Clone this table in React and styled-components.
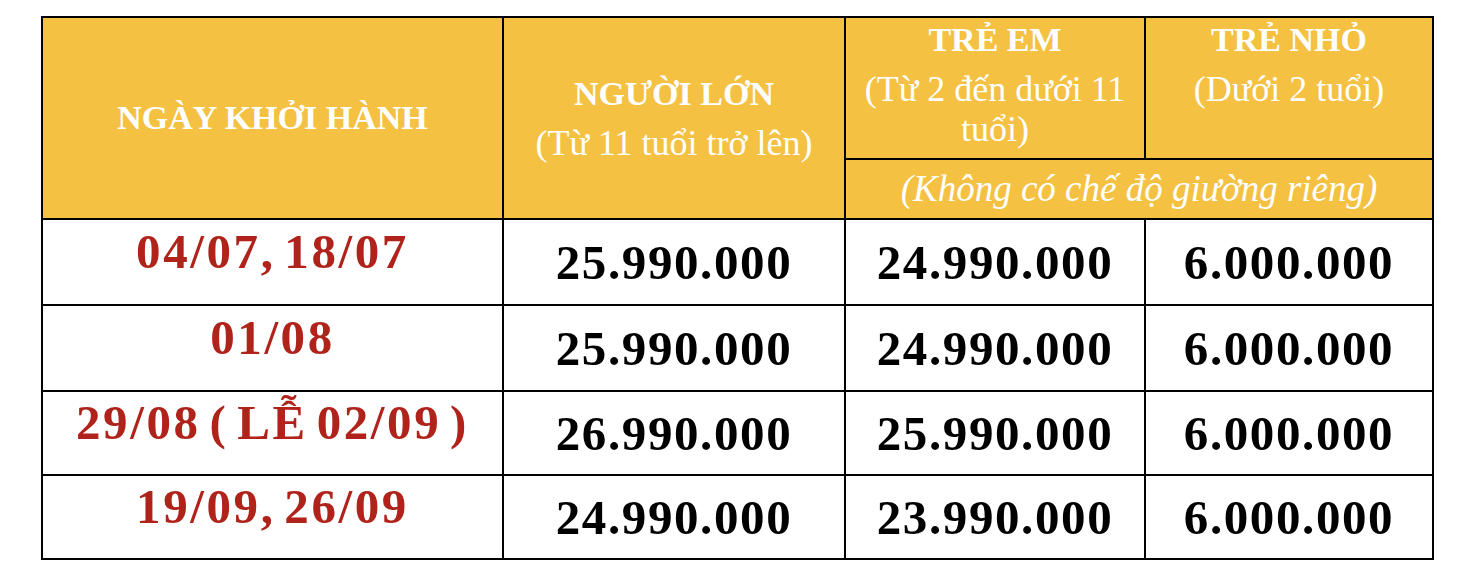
import React from 'react'
import styled, { createGlobalStyle } from 'styled-components'

const GlobalStyle = createGlobalStyle`
    body {
        margin: 0;
        background: #ffffff;
        font-family: "Liberation Serif", "Times New Roman", serif;
    }
`

const Page = styled.div`
    padding: 16px 0 0 41px;
`

const PriceGrid = styled.div`
    display: grid;
    grid-template-columns: 459px 340px 298px 286px;
    grid-template-rows: 140px 58px 84px 84px 82px 82px;
    gap: 2px;
    padding: 2px;
    width: max-content;
    background: #000;
`

const HeadCell = styled.div`
    grid-row: ${(props) => props.rows ? `span ${props.rows}` : 'auto'};
    grid-column: ${(props) => props.cols ? `span ${props.cols}` : 'auto'};
    background: #f4c143;
    color: #fff;
    display: flex;
    flex-direction: column;
    align-items: center;
    justify-content: ${(props) => props.top ? 'flex-start' : 'center'};
    padding: ${(props) => props.top ? '2px 8px 0' : '0 8px'};
    text-align: center;
`

const HeadTitle = styled.div`
    font-weight: bold;
    font-size: 34px;
    line-height: 40px;
    margin-bottom: ${(props) => props.alone ? '0' : '9px'};
`

const HeadSub = styled.div`
    font-size: 36px;
    line-height: 40px;
`

const HeadNote = styled.div`
    font-style: italic;
    font-size: 37px;
    line-height: 40px;
`

const Cell = styled.div`
    background: #fff;
    display: flex;
    align-items: center;
    justify-content: center;
    font-weight: bold;
    font-size: 49px;
    letter-spacing: ${(props) => props.date ? '2.6px' : '1.6px'};
    word-spacing: ${(props) => props.date ? '-6px' : '0'};
    color: ${(props) => props.date ? '#b0231b' : '#000'};
    padding-bottom: ${(props) => props.date ? '22px' : '0'};
    white-space: nowrap;
`

const rows = [
    { date: '04/07, 18/07', adult: '25.990.000', child: '24.990.000', baby: '6.000.000' },
    { date: '01/08', adult: '25.990.000', child: '24.990.000', baby: '6.000.000' },
    { date: '29/08 ( LỄ 02/09 )', adult: '26.990.000', child: '25.990.000', baby: '6.000.000' },
    { date: '19/09, 26/09', adult: '24.990.000', child: '23.990.000', baby: '6.000.000' },
]

function App() {
    return (
        <Page>
            <GlobalStyle />
            <PriceGrid>
                <HeadCell rows={2}>
                    <HeadTitle alone>NGÀY KHỞI HÀNH</HeadTitle>
                </HeadCell>
                <HeadCell rows={2}>
                    <HeadTitle>NGƯỜI LỚN</HeadTitle>
                    <HeadSub>(Từ 11 tuổi trở lên)</HeadSub>
                </HeadCell>
                <HeadCell top>
                    <HeadTitle>TRẺ EM</HeadTitle>
                    <HeadSub>(Từ 2 đến dưới 11 tuổi)</HeadSub>
                </HeadCell>
                <HeadCell top>
                    <HeadTitle>TRẺ NHỎ</HeadTitle>
                    <HeadSub>(Dưới 2 tuổi)</HeadSub>
                </HeadCell>
                <HeadCell cols={2}>
                    <HeadNote>(Không có chế độ giường riêng)</HeadNote>
                </HeadCell>
                {rows.map((r) => (
                    <React.Fragment key={r.date}>
                        <Cell date>{r.date}</Cell>
                        <Cell>{r.adult}</Cell>
                        <Cell>{r.child}</Cell>
                        <Cell>{r.baby}</Cell>
                    </React.Fragment>
                ))}
            </PriceGrid>
        </Page>
    )
}

export default App
